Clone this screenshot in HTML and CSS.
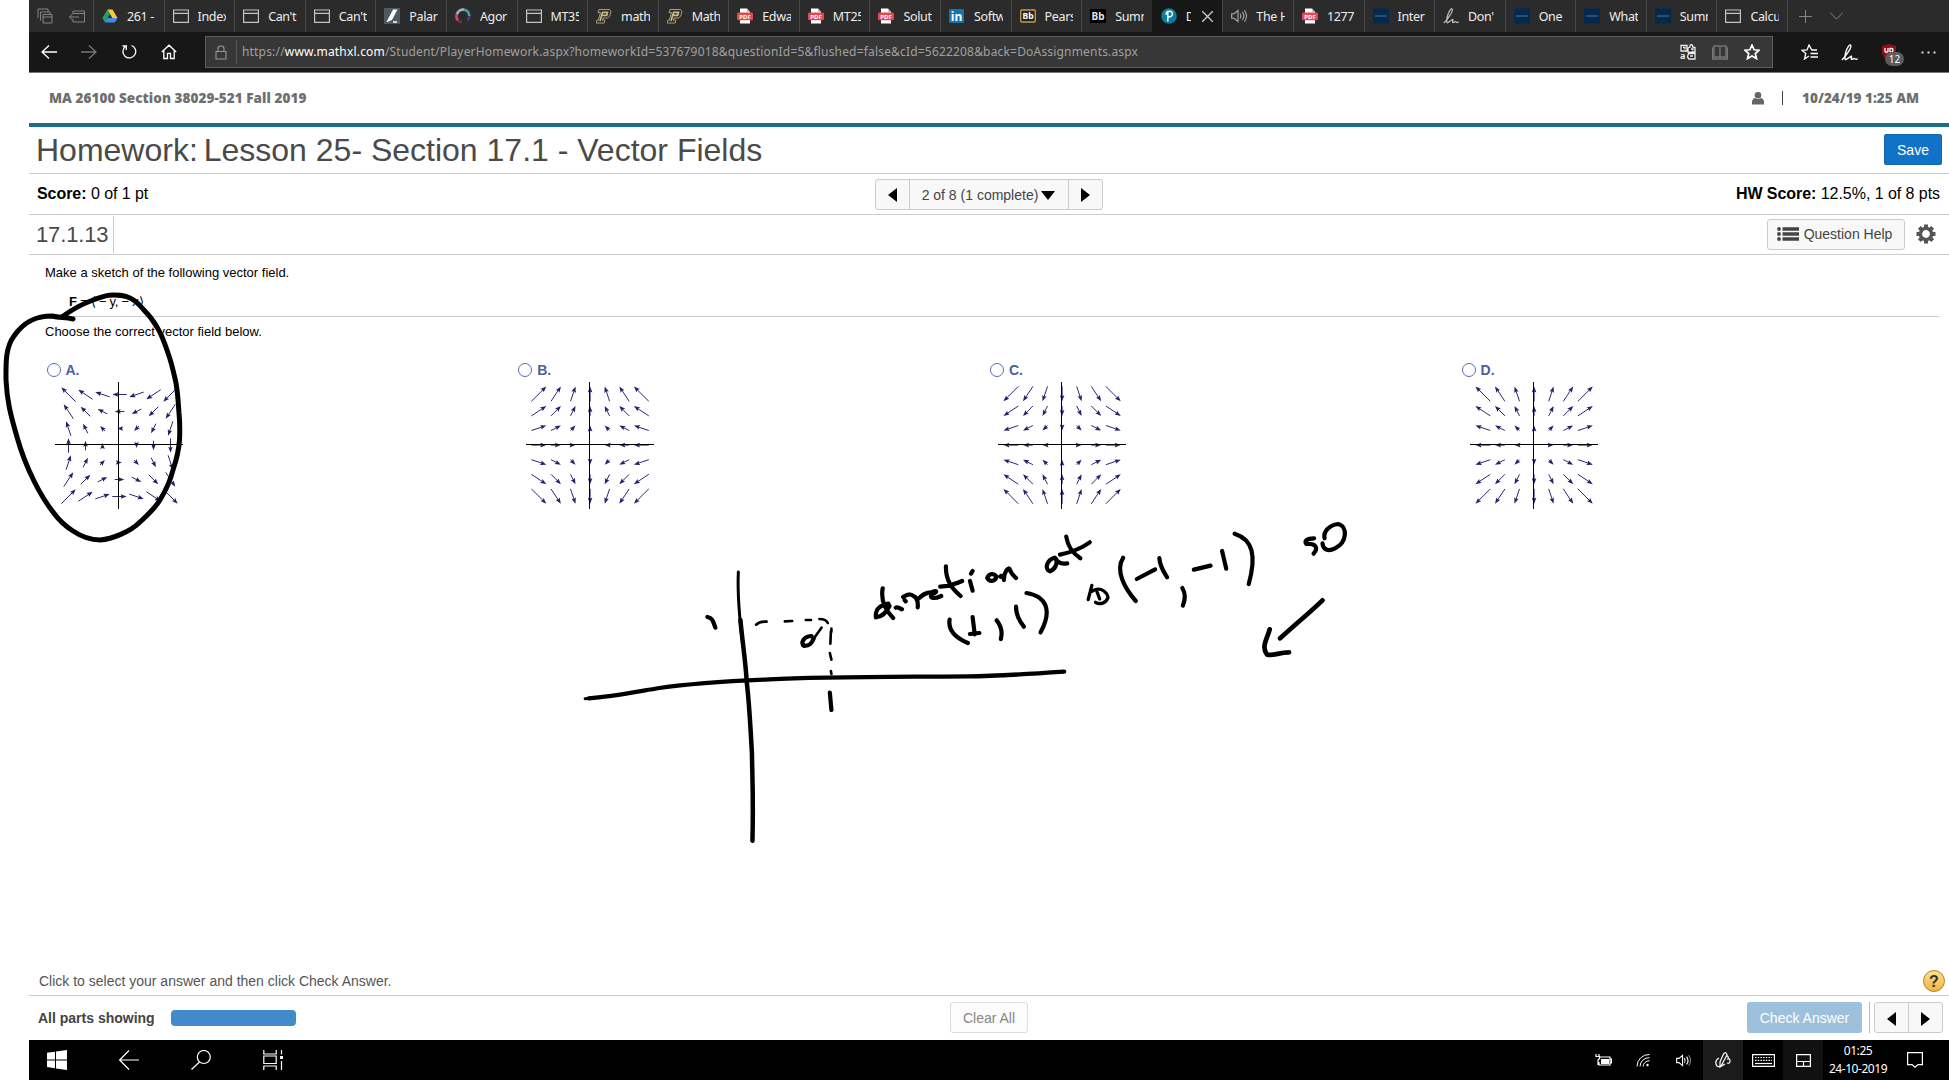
FILE: index.html
```html
<!DOCTYPE html>
<html lang="en">
<head>
<meta charset="utf-8">
<title>MathXL Homework</title>
<link rel="stylesheet" href="styles.css">
</head>
<body>
<svg class="defs" width="0" height="0">
  <symbol id="i-page" viewBox="0 0 16 16"><path d="M.6 2h14.8v12.4H.6zM.6 5.3h14.8" fill="none" stroke="#c4c4c4" stroke-width="1.2"/></symbol>
  <symbol id="i-drive" viewBox="0 0 16 16"><path d="M5.3 1.5h5.2l5 8.5h-5.2z" fill="#f7c93b"/><path d="M5.3 1.5 8 6 3 14.5.4 10z" fill="#1da462"/><path d="M5.5 10h10l-2.6 4.5H3z" fill="#4688f1"/></symbol>
  <symbol id="i-quill" viewBox="0 0 16 16"><path d="M0 0h16v16H0z" fill="#4d5a62"/><path d="M2.500 14 9 1.500h4.500L8 12l-4.500 2z" fill="#fff"/><path d="M9 14h4" stroke="#fff" stroke-width="1.5"/></symbol>
  <symbol id="i-ring" viewBox="0 0 16 16"><g fill="none" stroke-width="2.7"><path d="M3 12.5A6.4 6.4 0 0 1 2 6" stroke="#d5485b"/><path d="M2 6a6.4 6.4 0 0 1 7-4.3" stroke="#9fb4cb"/><path d="M9 1.700a6.400 6.400 0 0 1 5.300 6.300" stroke="#43a39b"/><path d="M14.300 8a6.400 6.400 0 0 1-2 4.600" stroke="#3d3f80"/><path d="M3 12.500a6.400 6.400 0 0 0 4 2" stroke="#7b2842"/></g></symbol>
  <symbol id="i-purdue" viewBox="0 0 16 16"><path d="M3 1.500h10.500l1.500 2-1.500 5-2 1.500H7l-.600 2.200H9l-.800 2.800H0l.800-2.800h1.500L4.500 4.500H2z" fill="#302b22" stroke="#b5aa88" stroke-width=".9"/><path d="M6 4.300h5.500l-.8 3H6.500M6.500 4.500 4 13" fill="none" stroke="#c5b88c" stroke-width="1.700"/></symbol>
  <symbol id="i-pdf" viewBox="0 0 16 16"><path d="M3 .5h7L13 4v11.500H3z" fill="#fff"/><path d="M10 .5V4h3z" fill="#bbb"/><rect y="4.500" width="16" height="7.800" rx="1.500" fill="#e14b4f"/><text x="8" y="10.600" text-anchor="middle" font-size="6" font-weight="700" fill="#fff">PDF</text></symbol>
  <symbol id="i-in" viewBox="0 0 16 16"><rect y="1" width="15" height="14" rx="1" fill="#1576ad"/><text x="7.500" y="12.500" text-anchor="middle" font-size="12" font-weight="700" fill="#fff">in</text></symbol>
  <symbol id="i-bbgold" viewBox="0 0 16 16"><rect x=".7" y="2" width="14.600" height="12" rx="1" fill="#222" stroke="#c79b47" stroke-width="1.300"/><text x="8" y="11" text-anchor="middle" font-size="8.500" font-weight="700" fill="#fff">Bb</text></symbol>
  <symbol id="i-bb" viewBox="0 0 16 16"><path d="M0 1h16v14H0z" fill="#000"/><text x="8" y="11.500" text-anchor="middle" font-size="10" font-weight="700" fill="#e4e4e4">Bb</text></symbol>
  <symbol id="i-pearson" viewBox="0 0 16 16"><circle cx="8" cy="8" r="7.800" fill="#0b7c9d"/><path d="M6.800 13.500V4M5 6.800C5 2 12 2.500 11.500 6c-.3 2.500-2.700 3.200-4.500 2.600" fill="none" stroke="#fff" stroke-width="1.500"/></symbol>
  <symbol id="i-sound" viewBox="0 0 16 16"><path d="M.7 5.700h2.500L7 2.500v11L3.200 10.300H.7zM9 5.500q1.600 2.500 0 5M11.300 3.800q3 4.200 0 8.400M13.500 2.300q4 5.700 0 11.400" fill="none" stroke="#aaa" stroke-width="1.100"/></symbol>
  <symbol id="i-navy" viewBox="0 0 16 16"><path d="M0 .5h16v15H0z" fill="#04294f"/><path d="M2 8h12" stroke="#547795"/></symbol>
  <symbol id="i-pen" viewBox="0 0 16 16"><path d="M.8 15C4 12 9.800 4 9.300 1.500 8.800-.5 6 2 4.300 8.500c-1.300 5.300-.5 7 .7 6l4.500-3c1.200-.7-.700 3 .6 3s1.700-1.300 2.600-.7 1.300 1 3 .3" fill="none" stroke="currentColor" stroke-width="1.300"/></symbol>
</svg>

<div class="window">
  <nav class="tabs">
    <div class="tab-tools">
      <svg width="16" height="16" viewBox="0 0 16 16"><path d="M1 10V1h10v3M3.500 12.500V4H13v2M6 6.500h9V15H6zM6 9h9" /></svg>
      <svg width="16" height="16" viewBox="0 0 16 16"><path d="M4 6V3h11.500v11H4v-3M4 5.500h11.500M.5 9H10M3.500 6 .5 9l3 3"/></svg>
    </div>
    <div class="tab-list">
      <div class="tab"><svg><use href="#i-drive"/></svg><span>261 -</span></div>
      <div class="tab"><svg><use href="#i-page"/></svg><span>Index</span></div>
      <div class="tab"><svg><use href="#i-page"/></svg><span>Can't</span></div>
      <div class="tab"><svg><use href="#i-page"/></svg><span>Can't</span></div>
      <div class="tab"><svg><use href="#i-quill"/></svg><span>Palar</span></div>
      <div class="tab"><svg><use href="#i-ring"/></svg><span>Agor</span></div>
      <div class="tab"><svg><use href="#i-page"/></svg><span>MT35</span></div>
      <div class="tab"><svg><use href="#i-purdue"/></svg><span>math</span></div>
      <div class="tab"><svg><use href="#i-purdue"/></svg><span>Math</span></div>
      <div class="tab"><svg><use href="#i-pdf"/></svg><span>Edwa</span></div>
      <div class="tab"><svg><use href="#i-pdf"/></svg><span>MT25</span></div>
      <div class="tab"><svg><use href="#i-pdf"/></svg><span>Solut</span></div>
      <div class="tab"><svg><use href="#i-in"/></svg><span>Softw</span></div>
      <div class="tab"><svg><use href="#i-bbgold"/></svg><span>Pears</span></div>
      <div class="tab"><svg><use href="#i-bb"/></svg><span>Sumn</span></div>
      <div class="tab active"><svg><use href="#i-pearson"/></svg><span>D</span><svg class="close" viewBox="0 0 10 10"><path d="M0 0l10 10M10 0 0 10" stroke="#ccc" stroke-width="1.200"/></svg></div>
      <div class="tab"><svg><use href="#i-sound"/></svg><span>The H</span></div>
      <div class="tab"><svg><use href="#i-pdf"/></svg><span>1277</span></div>
      <div class="tab"><svg><use href="#i-navy"/></svg><span>Inter</span></div>
      <div class="tab pen"><svg><use href="#i-pen"/></svg><span>Don'</span></div>
      <div class="tab"><svg><use href="#i-navy"/></svg><span>One</span></div>
      <div class="tab"><svg><use href="#i-navy"/></svg><span>What</span></div>
      <div class="tab"><svg><use href="#i-navy"/></svg><span>Sumn</span></div>
      <div class="tab"><svg><use href="#i-page"/></svg><span>Calcu</span></div>
    </div>
    <div class="tab-tools end">
      <svg width="13" height="13" viewBox="0 0 13 13"><path d="M6.500 0v13M0 6.500h13"/></svg>
      <svg width="13" height="8" viewBox="0 0 13 8"><path d="M0 .5l6.500 6.500L13 .5"/></svg>
    </div>
  </nav>

  <div class="navbar">
    <div class="nav-buttons">
      <svg width="16" height="16" viewBox="0 0 16 16"><path d="M8 1.500 1 8l7 6.500M1 8h15"/></svg>
      <svg class="dim" width="16" height="16" viewBox="0 0 16 16"><path d="M8 1.500 15 8l-7 6.500M15 8H0"/></svg>
      <svg width="16" height="16" viewBox="0 0 16 16"><path d="M10.500 1.500A6.400 6.400 0 1 1 4.200 2.600M1.500 2h3.800v4"/></svg>
      <svg width="16" height="16" viewBox="0 0 16 16"><path d="M.8 8 8 1.200 15.200 8M2.800 6.500v8h3.700V9.300h3v5.200h3.700v-8"/></svg>
    </div>
    <div class="address">
      <svg class="lock" width="12" height="15" viewBox="0 0 12 15"><path d="M1 6.500h10V14H1zM3 6.500v-3q0-2.500 3-2.500t3 2.500v3"/></svg>
      <span class="url">https://<b>www.mathxl.com</b>/Student/PlayerHomework.aspx?homeworkId=537679018&amp;questionId=5&amp;flushed=false&amp;cId=5622208&amp;back=DoAssignments.aspx</span>
      <div class="address-icons">
        <svg width="16" height="16" viewBox="0 0 16 16"><path d="M1 1.500h6v5.500H1zM8 4l2-1V1.500q1.500-2 2.500 0V3l2.500.5V8H12l-2 .5L8 8zM8.500 9.500H15V15H9l-1.500-2z" fill="#222" stroke="#eee"/><path d="M3 3.500h2v2M10 12h3M11 5h2v1.500" stroke="#eee"/><text x="0" y="15" font-size="9" font-weight="700" fill="#eee" stroke="none">a</text></svg>
        <svg class="dim" width="16" height="16" viewBox="0 0 16 16"><path d="M8 3q0-1-1.500-1H2v11h4.500Q8 13 8 14q0-1 1.500-1H14V2H9.500Q8 2 8 3v11M2 4H.5v11h15V4H14"/></svg>
        <svg class="star" width="16" height="16" viewBox="0 0 16 16"><path d="M8 1l2.100 4.800 5 .4-3.800 3.400 1.200 5L8 12l-4.500 2.600 1.200-5L.9 6.200l5-.4z"/></svg>
      </div>
    </div>
    <div class="hub">
      <svg width="17" height="16" viewBox="0 0 17 16"><path d="M16 6h-5.200L8 1 6 6 1 6.300l3.800 3.200L3.500 15 8 12M9.500 9.500H17M9.500 13H17"/></svg>
      <svg width="17" height="17" viewBox="0 0 16 16"><use href="#i-pen"/></svg>
      <span class="shield"><svg width="16" height="17" viewBox="0 0 16 17"><path d="M8 0 15 2v7q-1 5-7 8-6-3-7-8V2z" fill="#8f1018" stroke="none"/><path d="M4 4v3.500q1.500 1.500 3 0V4M9 8V4.500q3-.5 3 1.700T9 8" stroke="#fff"/></svg><em>12</em></span>
      <svg class="dots" width="15" height="3" viewBox="0 0 15 3"><path d="M.5.500h2v2h-2zM6.500.500h2v2h-2zM12.500.500h2v2h-2z"/></svg>
    </div>
  </div>

  <header class="course">
    <strong>MA 26100 Section 38029-521 Fall 2019</strong>
    <div class="user">
      <svg width="12" height="13" viewBox="0 0 12 13"><circle cx="6" cy="3.300" r="3.300" fill="#666"/><path d="M0 12.500V9q1-3 3-3 3 2 6 0 2 0 3 3v3.500z" fill="#666"/></svg>
      <i></i><strong>10/24/19 1:25 AM</strong>
    </div>
  </header>

  <section class="title-row"><h1><span>Homework:</span> Lesson 25- Section 17.1 - Vector Fields</h1><button class="save">Save</button></section>
  <section class="score-row">
    <div><b>Score:</b> 0 of 1 pt</div>
    <div class="pager"><span><i class="left"></i></span><span class="where">2 of 8 (1 complete)<i class="down"></i></span><span><i class="right"></i></span></div>
    <div class="hw"><b>HW Score:</b> 12.5%, 1 of 8 pts</div>
  </section>
  <section class="number-row">
    <div class="number">17.1.13</div>
    <div class="help-tools">
      <button class="qhelp"><svg width="22" height="14" viewBox="0 0 22 14"><path d="M5.500 2H22M5.500 7H22M5.500 12H22" stroke="#444" stroke-width="3.600"/><g fill="#444"><circle cx="2" cy="2" r="1.900"/><circle cx="2" cy="7" r="1.900"/><circle cx="2" cy="12" r="1.900"/></g></svg>Question Help</button>
      <svg class="gear" width="20" height="20" viewBox="-10 -10 20 20"><circle r="5.600" fill="none" stroke="#555" stroke-width="3.400"/><g stroke="#555" stroke-width="4"><path d="M0-6.500v-3M0 6.500v3M-6.500 0h-3M6.500 0h3M4.600-4.600l2.100-2.100M-4.600 4.600l-2.100 2.100M4.600 4.600l2.100 2.100M-4.600-4.600l-2.100-2.100"/></g></svg>
    </div>
  </section>

  <main class="question">
    <p class="prompt">Make a sketch of the following vector field.</p>
    <p class="formula"><b>F</b> = ⟨ − y, − x⟩</p>
    <hr>
    <p class="choose">Choose the correct vector field below.</p>
    <div class="choices">
      <div class="choice"><label><i></i>A.</label><svg class="plot" data-field="a" width="128" height="128"></svg></div>
      <div class="choice"><label><i></i>B.</label><svg class="plot" data-field="b" width="128" height="128"></svg></div>
      <div class="choice"><label><i></i>C.</label><svg class="plot" data-field="c" width="128" height="128"></svg></div>
      <div class="choice"><label><i></i>D.</label><svg class="plot" data-field="d" width="128" height="128"></svg></div>
    </div>
    <div class="hint"><span>Click to select your answer and then click Check Answer.</span><b>?</b></div>
  </main>

  <footer class="actions">
    <strong>All parts showing</strong><div class="progress"></div>
    <button class="clear">Clear All</button>
    <button class="check">Check Answer</button><i class="rule"></i>
    <div class="pager small"><span><i class="left"></i></span><span><i class="right"></i></span></div>
  </footer>

  <div class="taskbar">
    <div class="task-left">
      <svg width="20" height="20" viewBox="0 0 20 20"><path d="M0 2.800 8 1.700v7.700H0zM9 1.500 20 0v9.400H9zM0 10.400h8v7.800L0 17.100zM9 10.400h11V20L9 18.400z" fill="#fff" stroke="none"/></svg>
      <svg width="20" height="20" viewBox="0 0 20 20"><path d="M10 .5.700 10l9.300 9.500M.7 10H20"/></svg>
      <svg width="20" height="20" viewBox="0 0 20 20"><circle cx="12.800" cy="7" r="6.500"/><path d="M8.500 12 .5 19.500"/></svg>
      <svg width="20" height="20" viewBox="0 0 20 20"><path d="M.8 0v4h12.400V0M.8 6h12.400v7.500H.8zM.8 20v-4h12.400v4M18.500 0v4.500M18.500 11v9M17 7.500h3"/><path d="M17 6h3v3h-3z" fill="#fff" stroke="none"/></svg>
    </div>
    <div class="tray">
      <span><svg width="17" height="12" viewBox="0 0 17 12"><path d="M5 3h10v8H4V8M15 5h1.500v4H15M1 0v2M4 0v2M.5 2.500h4v2L3 6v5"/><path d="M6 5h8v5H6z" fill="#fff" stroke="none"/></svg></span>
      <span><svg class="wifi" width="14" height="14" viewBox="0 0 14 14"><path d="M1 13.500A12 12 0 0 1 13.500 1.500M4 13.500a9 9 0 0 1 9.500-8.800M7 13.500a6.500 6.500 0 0 1 6.500-5.800"/><circle cx="11.500" cy="12" r="1.200" fill="#fff" stroke="none"/></svg></span>
      <span><svg width="17" height="15" viewBox="0 0 16 16"><path d="M.7 5.700h2.500L7 2.500v11L3.200 10.300H.7zM9 5.500q1.600 2.500 0 5M11.300 3.800q3 4.200 0 8.400"/><path d="M13.500 2.300q4 5.700 0 11.400" stroke="#777"/></svg></span>
      <span class="lit"><svg width="16" height="16" viewBox="0 0 16 16"><path d="M4 6Q0 8 1 12t5 2l6-11Q11-1 8.500 2L5 10v5l5-3M11 4q3-.500 2 3 2-1 2 2t-3 2"/></svg></span>
      <span><svg width="23" height="13" viewBox="0 0 23 13"><path d="M.6.6h21.800v11.800H.6z"/><path d="M3 3.500h17M3 6.300h17" stroke-dasharray="1.500 1.200"/><path d="M3 9.500h17" /></svg></span>
      <span class="lit2"><svg width="15" height="13" viewBox="0 0 15 13"><path d="M.6.6h13.800v11.800H.6zM.6 7.500h13.800M7.500 7.500v5"/></svg></span>
      <div class="clock">01:25<br>24-10-2019</div>
      <svg class="note" width="16" height="16" viewBox="0 0 16 16"><path d="M.6.6h14.800v12H11L8 15.300 5 12.600H.6z"/></svg>
    </div>
  </div>
</div>

<svg class="ink" width="1949" height="1080" viewBox="0 0 1949 1080">
  <path stroke-width="5" d="M73 319C65 317 60 318 52 316C38 316 25 320 14 336C5 348 6 365 6 380C7 400 10 413 17 437C22 455 27 467 34 481C41 495 46 503 53 512C58 519 65 526 73 531C82 537 92 540 100 540C112 539 130 532 140 522C150 513 155 508 160 500C166 490 170 482 173 470C178 455 179 448 179.500 440C180 430 180 423 179 413C178 400 178 395 176 383C173 370 172 364 168 353C164 341 162 335 157 327C153 320 148 314 143 309C138 303 135 300 130 298C124 295 120 295 113 295C105 295 99 298 93 300C85 303 75 307 62 317"/>
  <g class="notes" transform="translate(560 500) scale(.52296 .33333)">
    <path stroke-width="3" d="M341 216C339 285 343 355 350 440"/>
    <path stroke-width="4.500" d="M345 360C349 430 355 485 357 545C362 610 364 670 367 760C368 850 370 900 368 1022"/>
    <path stroke-width="3" d="M48 596L75 592"/>
    <path stroke-width="4.300" d="M55 595C95 591 130 580 190 564C250 550 320 543 400 538C500 530 600 531 780 529C840 528 880 524 964 515"/>
    <path stroke-width="2.600" d="M375 374Q382 364 395 365M430 364L444 363M470 360L480 360M496 357Q509 357 512 369M519 386L519 395M518 395L517 431M516 459L519 479M518 513L519 522M500 383L485 416"/>
    <path d="M282 351C292 354 293 365 297 383M516 578L519 630M485 416C481 430 478 437 467 438C460 430 464 410 481 408"/>
    <path d="M617 265C613 300 622 330 637 354M628 311C605 318 603 335 604 352C617 350 625 335 630 318M642 323Q645 320 654 328M659 300L661 304M656 291C670 278 672 284 680 292C684 302 685 310 684 322M684 298C691 288 698 276 711 277C720 270 724 275 711 283C705 295 715 298 729 288M738 199C737 240 749 265 766 288M727 260Q748 258 769 243M784 243Q786 255 789 272M789 213L786 221M817 234C822 249 835 243 834 228C828 217 819 223 817 234M842 230Q846 222 849 240C848 218 858 198 860 208C862 221 869 229 872 234"/>
    <path d="M946 173C930 180 926 208 937 214C950 206 951 184 948 176Q954 195 970 190M968 110C972 147 984 163 995 175M956 164Q991 152 1013 127"/>
    <path d="M745 359C742 388 754 412 780 429M789 351L793 403M784 402L802 399M835 361Q848 387 843 417M872 320Q872 350 887 380M892 279C930 289 942 330 919 397"/>
    <path stroke-width="3.300" d="M1017 256L1010 299M1017 274C1036 256 1047 281 1048 293C1044 310 1032 315 1024 307M1027 276L1032 297"/>
    <path d="M1077 173C1061 212 1080 266 1101 303M1103 237L1138 208M1146 174C1147 196 1152 211 1161 232M1190 264Q1199 287 1191 317M1212 209L1244 197M1266 153L1274 206M1290 101C1325 119 1332 166 1317 252"/>
    <path d="M1442 115Q1421 116 1427 132C1445 130 1451 142 1441 161M1458 130C1459 148 1468 156 1482 145C1506 127 1506 78 1488 72C1470 76 1459 96 1462 115"/>
    <path stroke-width="4.700" d="M1458 301C1437 333 1405 375 1377 415M1357 388C1353 414 1340 440 1352 464C1365 468 1375 457 1394 457"/>
  </g>
</svg>
<script src="plots.js"></script>
</body>
</html>
```

FILE: styles.css
```css
* { box-sizing: border-box; }
body { margin: 0; background: #fff; font-family: "Liberation Sans", Arial, sans-serif; color: #000; overflow: hidden; }
button { font: inherit; margin: 0; padding: 0; }
p { margin: 0; }
.defs { display: none; }
.window { margin-left: 29px; width: 1920px; height: 1080px; display: flex; flex-direction: column; }
.tabs, .navbar, .taskbar { font-family: "Noto Sans", "Open Sans", sans-serif; flex: none; }

.tabs { height: 32px; background: #2b2b2b; display: flex; }
.tab-tools { width: 64px; display: flex; align-items: center; gap: 16px; padding-left: 8px; }
.tab-tools svg path { fill: none; stroke: #858585; stroke-width: 1; }
.tab-tools.end { width: 161px; gap: 18px; padding-left: 11px; }
.tab-list { width: 1695px; display: grid; grid-template-columns: repeat(24, 1fr); border-right: 1px solid #454545; }
.tab { display: flex; align-items: center; min-width: 0; border-left: 1px solid #454545; padding: 0 8px; font-size: 12.5px; color: #ededed; white-space: nowrap; }
.tab svg { width: 16px; height: 16px; flex: none; margin-right: 9px; }
.tab span { flex: 1; overflow: hidden; letter-spacing: -.35px; }
.tab.active { background: #171717; border-color: #171717; }
.tab.active span { flex: none; width: 5px; }
.tab.active .close { width: 11px; height: 11px; margin: 0 0 0 11px; }
.tab.pen svg { color: #bbb; }

.navbar { height: 41px; background: #171717; border-bottom: 1px solid #777; display: flex; align-items: center; }
.navbar svg { fill: none; stroke: #fff; stroke-width: 1.3; }
.navbar svg.dim { stroke: #777; }
.nav-buttons { width: 176px; display: flex; gap: 24px; padding-left: 12px; }
.address { width: 1568px; height: 32px; background: #373737; border: 1px solid #5e5e5e; display: flex; align-items: center; padding-left: 9px; }
.navbar .lock { stroke: #999; stroke-width: 1.1; }
.navbar .star { stroke-width: 1.7; }
.url { margin-left: 9px; border-left: 1px solid #555; padding-left: 5px; line-height: 24px; flex: 1; font-size: 12px; letter-spacing: .18px; color: #a0a0a0; white-space: nowrap; }
.url b { font-weight: 400; color: #fff; }
.address-icons { display: flex; gap: 16px; padding-right: 12px; }
.hub { display: flex; align-items: center; padding-left: 28px; gap: 23px; color: #fff; }
.shield { position: relative; display: flex; width: 17px; }
.shield em { position: absolute; left: 4px; top: 8px; width: 19px; height: 14px; border-radius: 7px; background: #5c5c5c; font: 10px/14px "Noto Sans", sans-serif; text-align: center; }
.navbar .dots { fill: #ddd; stroke: none; }

.course { height: 54px; flex: none; border-bottom: 4px solid #1b6f85; display: flex; justify-content: space-between; align-items: center; padding: 0 30px 0 20px; font: 700 13.5px "Open Sans", sans-serif; color: #6f6f6f; }
.course > strong { letter-spacing: .06px; }
.user { display: flex; align-items: center; }
.user i { width: 1px; height: 14px; background: #444; margin: 0 19px 0 18px; }

.title-row { height: 47px; flex: none; border-bottom: 1px solid #ccc; display: flex; justify-content: space-between; padding: 7px 7px 0 7px; }
h1 { margin: -2px 0 0; font-size: 32px; line-height: 36px; font-weight: 400; color: #4a4a4a; white-space: nowrap; }
h1 span { margin-right: -3px; }
.save { width: 58px; height: 31px; border: 1px solid #1467ac; border-radius: 2px; background: #1173c7; color: #fff; font-size: 14px; }
.score-row { height: 41px; flex: none; border-bottom: 1px solid #ccc; display: grid; grid-template-columns: 1fr 228px 1fr; align-items: center; padding: 0 9px 0 8px; font-size: 16px; letter-spacing: -.05px; white-space: nowrap; }
.hw { text-align: right; }
.pager { height: 31px; border: 1px solid #ccc; border-radius: 3px; background: #f8f8f8; display: flex; color: #444; font-size: 14px; letter-spacing: 0; }
.pager span { width: 33px; display: flex; align-items: center; justify-content: center; padding-top: 2px; }
.pager .where { flex: 1; border: solid #ccc; border-width: 0 1px; gap: 3px; }
.pager i { width: 0; height: 0; border: 7px solid transparent; }
.pager .left { border-right: 9px solid #000; border-left: 0; }
.pager .right { border-left: 9px solid #000; border-right: 0; }
.pager .down { border-top: 9px solid #000; border-bottom: 0; }
.number-row { height: 40px; flex: none; border-bottom: 1px solid #ccc; display: flex; justify-content: space-between; align-items: center; padding: 0 13px 1px 7px; }
.number { height: 37px; width: 78px; border-right: 1px solid #ccc; font-size: 22px; line-height: 37px; letter-spacing: -.15px; color: #4a4a4a; white-space: nowrap; }
.help-tools { display: flex; align-items: center; gap: 11px; }
.qhelp { width: 138px; height: 31px; border: 1px solid #ccc; border-radius: 3px; background: #f8f8f8; color: #444; font-size: 14px; display: flex; align-items: center; justify-content: center; gap: 5px; padding-right: 3px; white-space: nowrap; }

.question { flex: 1; min-height: 0; display: flex; flex-direction: column; padding: 10px 0 0 16px; font-size: 13px; line-height: 16px; }
.prompt { height: 29px; }
.formula { height: 22px; padding-left: 24px; letter-spacing: -.25px; }
hr { flex: none; width: 1877px; margin: 0 0 0 17px; border: 0; border-top: 1px solid #ccc; }
.choose { margin-top: 7px; }
.choices { display: grid; grid-template-columns: repeat(4, 471.7px); margin-top: 22px; }
.choice { display: flex; flex-direction: column; }
.choice label { display: flex; align-items: center; gap: 5px; height: 16px; padding-left: 1.500px; color: #4a5f9e; font-weight: 700; font-size: 14px; }
.choice label i { width: 14px; height: 14px; border: 1px solid #5770a5; border-radius: 50%; }
.plot { margin: 4px 0 0 10px; }
.plot[data-field="b"] { margin-left: 9.300px; }
.hint { margin-top: auto; height: 27px; display: flex; justify-content: space-between; padding: 0 4px 0 0; margin-left: -6px; font-size: 14px; line-height: 26px; color: #555; }
.hint b { width: 22px; height: 22px; margin-top: 2px; border-radius: 50%; border: 1px solid #a9822e; background: linear-gradient(#fde28a, #efb544); color: #333; text-align: center; line-height: 21px; font-size: 16px; }
.actions { height: 45px; flex: none; border-top: 1px solid #ccc; display: flex; align-items: center; padding: 0 6px 1px 9px; font-size: 14px; color: #444; white-space: nowrap; }
.actions strong { width: 133px; }
.progress { width: 125px; height: 16px; border-radius: 4px; background: #428bca; }
.actions button, .actions .pager { height: 31px; border-radius: 3px; }
.clear { width: 78px; margin-left: 654px; border: 1px solid #ddd; background: #fcfcfc; color: #888; }
.check { width: 115px; margin-left: auto; border: 0; background: #9dc1dc; color: #fff; }
.rule { width: 1px; height: 31px; background: #bbb; margin: 0 4px 0 7px; }
.pager.small { width: 69px; }
.pager.small span { flex: 1; }
.pager.small span + span { border-left: 1px solid #ccc; }

.taskbar { height: 40px; background: #000; display: flex; justify-content: space-between; color: #fff; }
.taskbar svg { fill: none; stroke: #fff; stroke-width: 1.2; }
.taskbar .wifi { stroke-width: 1; }
.task-left { display: flex; align-items: center; gap: 52px; padding-left: 18px; }
.tray { display: flex; align-items: center; padding-right: 25px; }
.tray span { width: 40px; height: 40px; display: flex; align-items: center; justify-content: center; }
.tray .lit { background: #1b1b1b; }
.tray .lit2 { background: #111; }
.clock { width: 70px; text-align: center; font-size: 12px; line-height: 18px; letter-spacing: -.45px; }
.note { margin-left: 14px; margin-right: 1px; }

.ink { position: absolute; left: 0; top: 0; pointer-events: none; fill: none; stroke: #000; stroke-linecap: round; stroke-linejoin: round; }
.notes path { vector-effect: non-scaling-stroke; }
.notes path:not([stroke-width]) { stroke-width: 4.2; }
```

FILE: plots.js
```javascript
// Draws the 7x7 arrow grids of the four answer choices.
const INNER = 14.6, OUTER = 19.55;

function arrow(x1, y1, x2, y2) {
  const len = Math.hypot(x2 - x1, y2 - y1);
  const ux = (x2 - x1) / len, uy = (y2 - y1) / len;
  const bx = x2 - ux * 6, by = y2 - uy * 6;
  const f = n => n.toFixed(1);
  return `<path d="M${f(x1)} ${f(y1)}L${f(x2 - ux * 3)} ${f(y2 - uy * 3)}" stroke="#35256b"/>` +
    `<path d="M${f(x2)} ${f(y2)}L${f(bx - uy * 2.3)} ${f(by + ux * 2.3)}L${f(bx + ux)} ${f(by + uy)}L${f(bx + uy * 2.3)} ${f(by - ux * 2.3)}Z" fill="#2f1b6c"/>`;
}

document.querySelectorAll('.plot').forEach(svg => {
  const kind = svg.dataset.field;
  let out = '';
  for (let i = -3; i <= 3; i++) for (let j = -3; j <= 3; j++) {
    if (!i && !j) continue;
    if (kind === 'a') {
      const x = 64.5 + i * 17, y = 63.5 - j * 17;
      out += arrow(x + j * 2.4, y - i * 2.4, x - j * 2.4, y + i * 2.4);
    } else {
      const xo = kind !== 'b', yo = kind !== 'c';
      out += arrow(64.1 + i * (xo ? OUTER - 4.95 : OUTER), 63.1 - j * (yo ? INNER : OUTER),
                   64.1 + i * (xo ? OUTER : INNER), 63.1 - j * (yo ? OUTER : INNER));
    }
  }
  svg.innerHTML = out + '<path d="M0 62.5h128M63.5 0v127" stroke="#000"/>';
});
```
